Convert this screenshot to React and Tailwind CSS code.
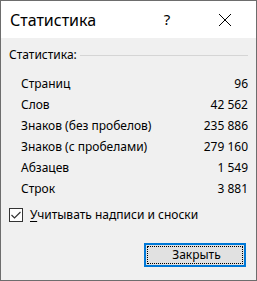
import React from "react";

const rows = [
  ["Страниц", "96"],
  ["Слов", "42 562"],
  ["Знаков (без пробелов)", "235 886"],
  ["Знаков (с пробелами)", "279 160"],
  ["Абзацев", "1 549"],
  ["Строк", "3 881"],
];

const App = () => {
  return (
    <div
      className="w-[257px] h-[281px] border border-[#6d6d6d] bg-[#f0f0f0] flex flex-col text-[12px] text-black"
      style={{ fontFamily: '"Segoe UI", "Noto Sans", sans-serif' }}
    >
      {/* title bar */}
      <div className="h-[37px] bg-white flex items-center shrink-0">
        <span className="ml-[9px] text-[16px] leading-none flex-1">Статистика</span>
        <span className="w-[14px] text-center text-[15px] leading-none mr-[44px]">?</span>
        <svg width="14" height="14" viewBox="0 0 14 14" className="mr-[24px]">
          <path d="M1 1L13 13M13 1L1 13" stroke="#000" strokeWidth="1" />
        </svg>
      </div>

      <div className="flex flex-col px-[8px] pt-[9px]">
        <div className="flex items-center h-[16px]">
          <span>Статистика:</span>
          <div className="flex-1 h-px bg-[#d5d5d5] ml-[3px]" />
        </div>

        <div className="flex flex-col pl-[12px] pt-[10px]">
          {rows.map(([label, value]) => (
            <div key={label} className="flex justify-between items-center h-[21px]">
              <span>{label}</span>
              <span>{value}</span>
            </div>
          ))}
        </div>

        <div className="flex items-center mt-[8px] h-[16px]">
          <div className="w-[14px] h-[14px] border border-[#333] bg-white flex items-center justify-center">
            <svg width="10" height="8" viewBox="0 0 10 8">
              <path d="M0.5 4L3.5 7L9.5 1" stroke="#333" strokeWidth="1.2" fill="none" />
            </svg>
          </div>
          <span className="ml-[7px]">
            <span className="underline underline-offset-2">У</span>читывать надписи и сноски
          </span>
        </div>

        <div className="flex justify-end mt-[20px] pr-[2px]">
          <button className="w-[102px] h-[24px] border-2 border-[#0078d7] bg-[#e1e1e1] p-px">
            <div className="w-full h-full border border-dotted border-black flex items-center justify-center text-[12px] pl-[3px]">
              Закрыть
            </div>
          </button>
        </div>
      </div>
    </div>
  );
};

export default App;
